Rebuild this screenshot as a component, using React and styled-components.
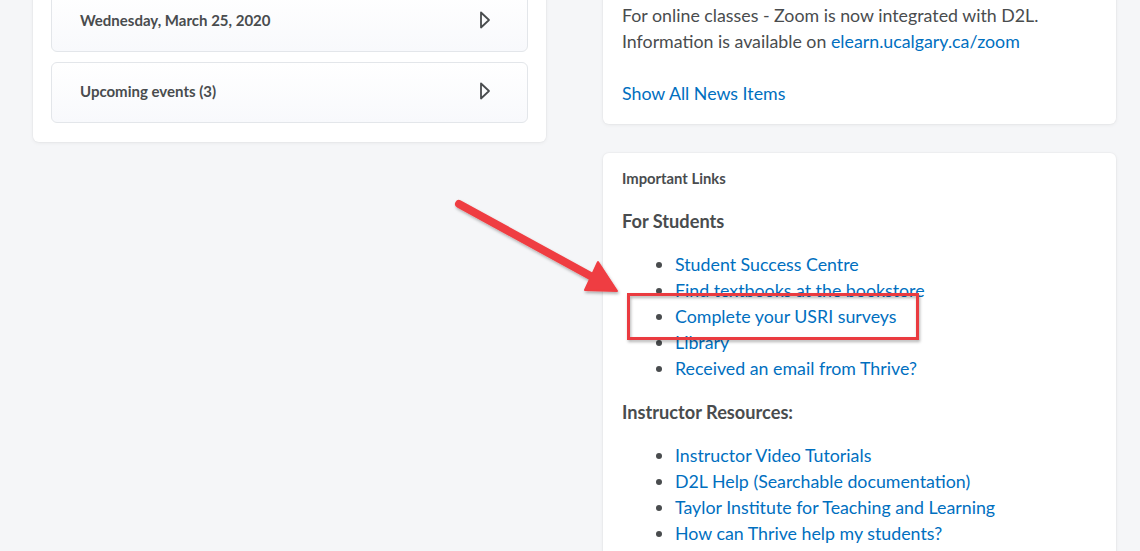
import React from "react";
import styled, { createGlobalStyle } from "styled-components";

const Global = createGlobalStyle`
  html, body { margin: 0; padding: 0; }
  body {
    background: #f5f6f8;
    font-family: Lato, "Noto Sans", sans-serif;
    color: #494c4e;
    overflow: hidden;
  }
`;

const Page = styled.div`
  position: relative;
  width: 1140px;
  height: 551px;
  overflow: hidden;
`;

const Columns = styled.div`
  display: grid;
  grid-template-columns: 513px 513px;
  column-gap: 57px;
  padding-left: 33px;
  margin-top: -27px;
  align-items: start;
`;

const Stack = styled.div`
  display: flex;
  flex-direction: column;
  gap: 29px;
`;

const Card = styled.section`
  background: #fff;
  border-radius: 6px;
  box-shadow: 0 1px 4px rgba(0, 0, 0, 0.06), 0 0 0 1px rgba(0, 0, 0, 0.02);
  padding: ${(p) => p.$pad || "18px 18px 19px"};
`;

const ItemList = styled.div`
  display: flex;
  flex-direction: column;
  gap: 10px;
`;

const Item = styled.div`
  box-sizing: border-box;
  display: flex;
  align-items: center;
  justify-content: space-between;
  height: 61px;
  padding: 0 36px 4px 28px;
  border: 1px solid #e3e6ea;
  border-radius: 6px;
  background: linear-gradient(180deg, #ffffff 0%, #f8f9fc 100%);
  font-size: 15px;
  font-weight: 700;
  color: #494c4e;
`;

const Caret = () => (
  <svg width="12" height="18" viewBox="0 0 12 18">
    <polygon
      points="2,1.5 10,9 2,16.5"
      fill="none"
      stroke="#494c4e"
      strokeWidth="1.8"
      strokeLinejoin="round"
    />
  </svg>
);

const Text = styled.p`
  margin: 0;
  font-size: 17.8px;
  line-height: 26px;
  color: #494c4e;
  & + & { margin-top: 26px; }
`;

const Link = styled.a`
  color: #006fbf;
  text-decoration: none;
`;

const SmallHead = styled.h3`
  margin: 0;
  font-size: 14.8px;
  line-height: 20px;
  font-weight: 700;
  color: #494c4e;
`;

const Heading = styled.h4`
  margin: ${(p) => p.$mt || "20px"} 0 0;
  font-size: 18.2px;
  line-height: 26px;
  font-weight: 700;
  color: #494c4e;
`;

const Links = styled.ul`
  margin: 17px 0 0;
  padding-left: 53px;
  list-style: disc;
  font-size: 17.8px;
  line-height: 26px;
  color: #494c4e;
  li::marker { color: #494c4e; }
`;

const Overlay = styled.svg`
  position: absolute;
  left: 0;
  top: 0;
  pointer-events: none;
`;

export default function App() {
  return (
    <Page>
      <Global />
      <Columns>
        <Stack>
          <Card>
            <ItemList>
              <Item>
                <span>Wednesday, March 25, 2020</span>
                <Caret />
              </Item>
              <Item>
                <span>Upcoming events (3)</span>
                <Caret />
              </Item>
            </ItemList>
          </Card>
        </Stack>
        <Stack>
          <Card $pad="29px 19px 18px">
            <Text>
              For online classes - Zoom is now integrated with D2L.
              <br />
              Information is available on{" "}
              <Link href="#">elearn.ucalgary.ca/zoom</Link>
            </Text>
            <Text>
              <Link href="#">Show All News Items</Link>
            </Text>
          </Card>
          <Card $pad="15px 19px 20px">
            <SmallHead>Important Links</SmallHead>
            <Heading>For Students</Heading>
            <Links>
              <li><Link href="#">Student Success Centre</Link></li>
              <li><Link href="#">Find textbooks at the bookstore</Link></li>
              <li><Link href="#">Complete your USRI surveys</Link></li>
              <li><Link href="#">Library</Link></li>
              <li><Link href="#">Received an email from Thrive?</Link></li>
            </Links>
            <Heading $mt="18px">Instructor Resources:</Heading>
            <Links>
              <li><Link href="#">Instructor Video Tutorials</Link></li>
              <li><Link href="#">D2L Help (Searchable documentation)</Link></li>
              <li><Link href="#">Taylor Institute for Teaching and Learning</Link></li>
              <li><Link href="#">How can Thrive help my students?</Link></li>
            </Links>
          </Card>
        </Stack>
      </Columns>
      <Overlay width="1140" height="551" viewBox="0 0 1140 551">
        <defs>
          <filter id="sh" x="-20%" y="-20%" width="140%" height="140%">
            <feDropShadow dx="1" dy="2" stdDeviation="1.5" floodColor="#000" floodOpacity="0.3" />
          </filter>
        </defs>
        <g filter="url(#sh)">
          <line x1="459" y1="204" x2="596" y2="279" stroke="#ef3e42" strokeWidth="8" strokeLinecap="round" />
          <polygon points="617,291 598,262 585,290" fill="#ef3e42" stroke="#ef3e42" strokeWidth="2" strokeLinejoin="round" />
          <rect x="628.5" y="294.5" width="289" height="44" fill="none" stroke="#ea3a40" strokeWidth="3" />
        </g>
      </Overlay>
    </Page>
  );
}
